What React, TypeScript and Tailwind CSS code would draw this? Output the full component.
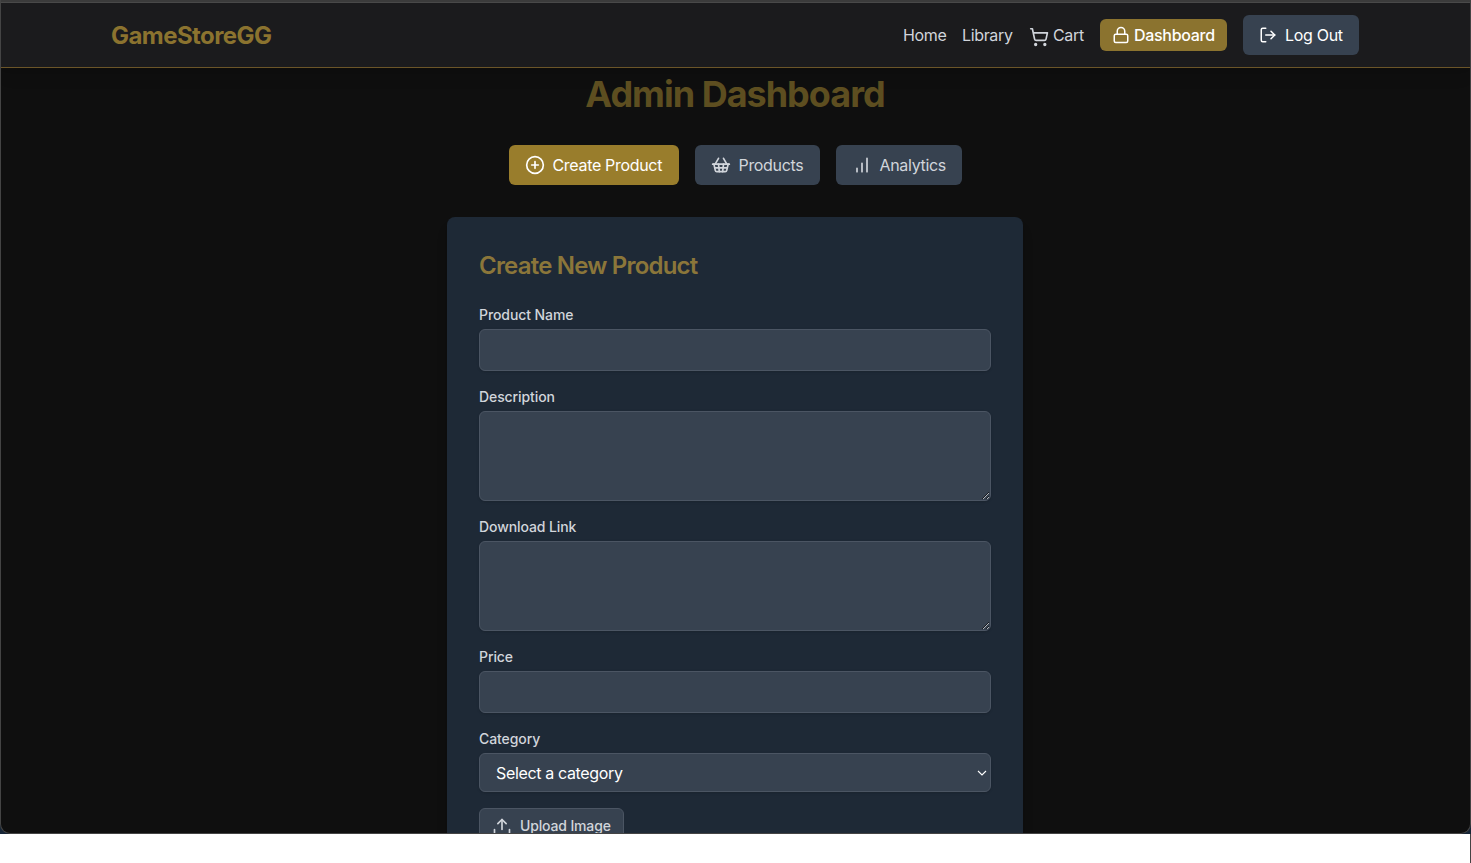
import type { ReactNode } from "react";
import { CirclePlus, Lock, LogOut, ShoppingBasket, ShoppingCart, Upload } from "lucide-react";

function BarsIcon({ className }: { className?: string }) {
  return (
    <svg viewBox="0 0 24 24" fill="none" stroke="currentColor" strokeWidth="2" strokeLinecap="round" className={className}>
      <path d="M12 20V10M18 20V4M6 20v-4" />
    </svg>
  );
}

function Field({ label, children }: { label: string; children: ReactNode }) {
  return (
    <div>
      <label className="block h-5 text-sm font-medium leading-5 tracking-[-0.09px] text-[#d1d5db]">{label}</label>
      {children}
    </div>
  );
}

const box = "mt-1 block w-full rounded-md border border-[#4b5563] bg-[#374250] px-3 text-white shadow-sm outline-none";

function Header() {
  return (
    <header className="h-[65px] shrink-0 border-b border-[#6b5528] bg-[#1b1b1d] pr-px shadow-lg">
      <div className="mx-auto flex h-16 max-w-[1280px] items-center justify-between px-4">
        <a className="pt-0.5 text-2xl font-bold tracking-[-0.56px] text-[#8b732f]">GameStoreGG</a>
        <nav className="flex items-center gap-4 text-base text-[#d1d5db]">
          <a className="w-[43px] whitespace-nowrap tracking-[-0.35px]">Home</a>
          <a className="w-[51px] whitespace-nowrap tracking-[-0.35px]">Library</a>
          <a className="flex w-[55px] items-center gap-1 whitespace-nowrap tracking-[-0.35px]">
            <ShoppingCart size={20} className="mt-[3px] shrink-0" />
            Cart
          </a>
          <a className="flex h-8 w-[127px] items-center gap-1 whitespace-nowrap rounded-md bg-[#8b732f] px-3 font-medium tracking-[-0.3px] text-white">
            <Lock size={18} className="shrink-0" />
            Dashboard
          </a>
          <button className="flex h-10 w-[116px] items-center gap-2 whitespace-nowrap rounded-md bg-[#374250] px-4 tracking-[-0.3px] text-white">
            <LogOut size={18} className="shrink-0" />
            Log Out
          </button>
        </nav>
      </div>
    </header>
  );
}

export default function App() {
  return (
    <div className="h-[863px] overflow-hidden bg-white font-[Inter,sans-serif]">
      <div className="h-[834px] overflow-hidden bg-[#162536]">
        <div className="flex h-full flex-col overflow-hidden rounded-b-[10px] border-x border-b border-[#444444] bg-[#0f0f0f]">
          <div className="h-[3px] shrink-0 border-b border-[#4a4a4a] bg-[#3b3b3b]" />
          <Header />
          <main className="flex flex-col items-center pr-px">
            <h1 className="mt-1.5 text-4xl font-bold leading-10 tracking-[-1px] text-[#5d4e20]">Admin Dashboard</h1>
            <div className="mt-[31px] flex gap-4 text-base tracking-[-0.32px] text-[#d1d5db]">
              <button className="flex h-10 w-[170px] items-center gap-2 whitespace-nowrap rounded-md bg-[#997d2c] px-4 text-white">
                <CirclePlus size={20} className="shrink-0" />
                Create Product
              </button>
              <button className="flex h-10 w-[125px] items-center gap-2 whitespace-nowrap rounded-md bg-[#374250] px-4">
                <ShoppingBasket size={20} className="shrink-0" />
                Products
              </button>
              <button className="flex h-10 w-[126px] items-center gap-2 whitespace-nowrap rounded-md bg-[#374250] px-4">
                <BarsIcon className="size-5 shrink-0" />
                Analytics
              </button>
            </div>
            <section className="mt-8 w-[576px] rounded-lg bg-[#1e2936] p-8 shadow-lg">
              <h2 className="mb-[23px] mt-px text-2xl font-semibold leading-8 tracking-[-0.8px] text-[#8b763a]">Create New Product</h2>
              <form className="flex flex-col gap-4">
                <Field label="Product Name">
                  <input className={`${box} h-[42px]`} />
                </Field>
                <Field label="Description">
                  <textarea className={`${box} h-[90px]`} />
                </Field>
                <Field label="Download Link">
                  <textarea className={`${box} h-[90px]`} />
                </Field>
                <Field label="Price">
                  <input className={`${box} h-[42px]`} />
                </Field>
                <Field label="Category">
                  <div className="mt-1 flex h-[39px] items-center justify-between rounded-md border border-[#4b5563] bg-[#374250] pl-4 pr-[3px] text-white shadow-sm">
                    <span className="tracking-[-0.35px]">Select a category</span>
                    <svg viewBox="0 0 10 6" className="h-1.5 w-2.5" fill="none" stroke="currentColor" strokeWidth="1.1">
                      <path d="M1 1l4 4 4-4" />
                    </svg>
                  </div>
                </Field>
                <button className="flex h-[38px] w-[145px] items-center whitespace-nowrap rounded-md border border-[#4b5563] bg-[#374250] px-3 text-sm font-medium tracking-[-0.15px] text-[#d1d5db]">
                  <Upload size={20} className="mr-2 shrink-0" />
                  <span className="pb-0.5">Upload Image</span>
                </button>
              </form>
            </section>
          </main>
        </div>
      </div>
      <div className="ml-auto h-[29px] w-px bg-[#444444]" />
    </div>
  );
}
